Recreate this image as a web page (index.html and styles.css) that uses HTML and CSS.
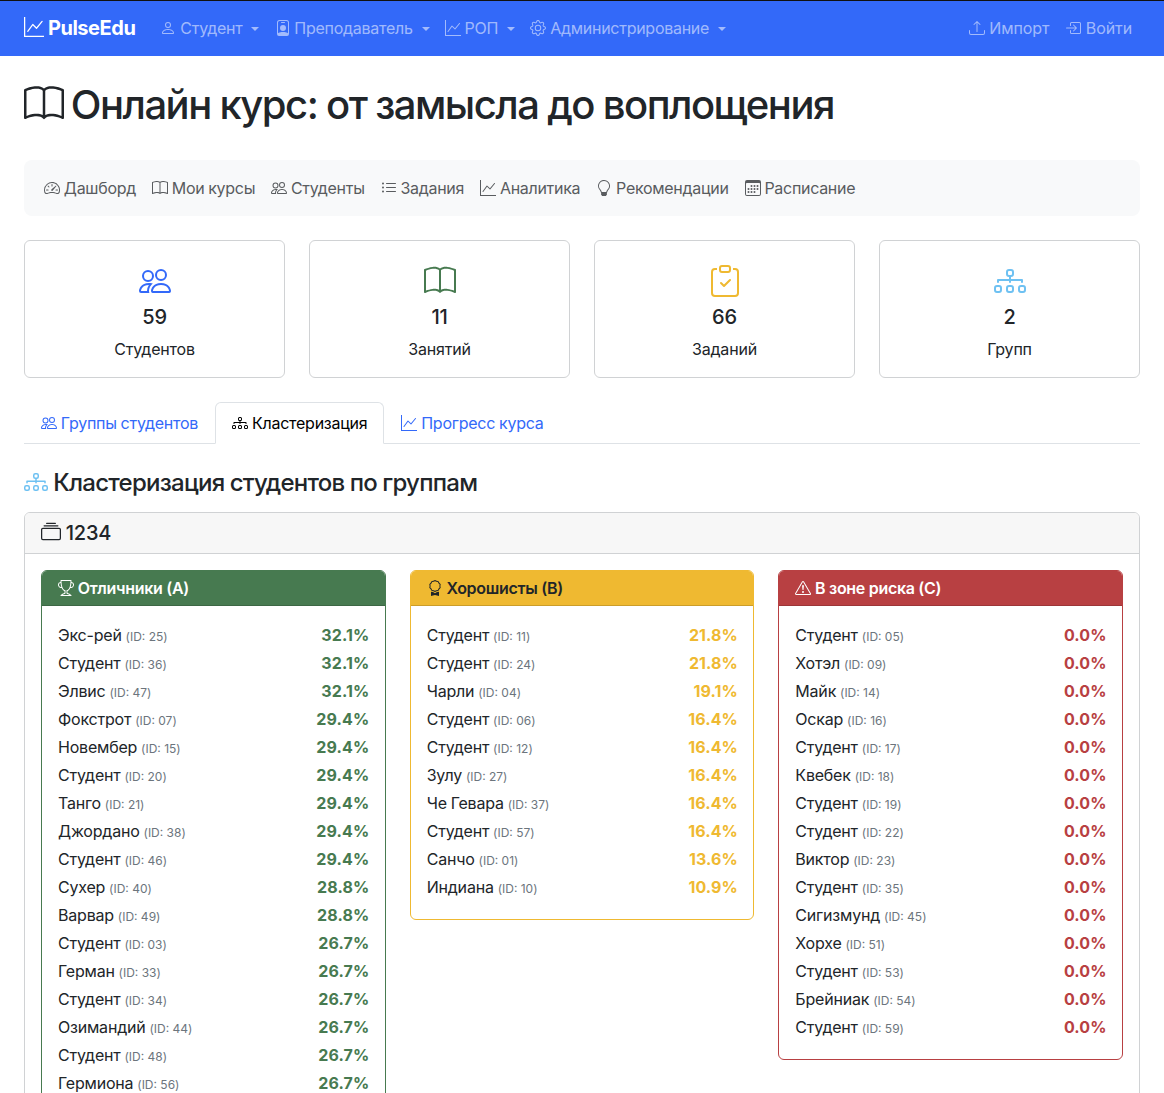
FILE: index.html
```html
<!DOCTYPE html>
<html lang="ru">

<head>
    <meta charset="UTF-8">
    <meta name="viewport" content="width=device-width, initial-scale=1.0">
    <title>PulseEdu</title>
    <link rel="stylesheet" href="styles.css">
</head>

<body>
    <svg class="icon-sprite" xmlns="http://www.w3.org/2000/svg">
        <symbol id="i-graph" viewBox="0 0 16 16"><path d="M0 0h1v15h15v1H0zm14.817 3.113a.5.5 0 0 1 .07.704l-4.5 5.5a.5.5 0 0 1-.74.037L7.06 6.767l-3.656 5.027a.5.5 0 0 1-.808-.588l4-5.5a.5.5 0 0 1 .758-.06l2.609 2.61 4.15-5.073a.5.5 0 0 1 .704-.07"/></symbol>
        <symbol id="i-person" viewBox="0 0 16 16"><path d="M8 8a3 3 0 1 0 0-6 3 3 0 0 0 0 6m2-3a2 2 0 1 1-4 0 2 2 0 0 1 4 0m4 8c0 1-1 1-1 1H3s-1 0-1-1 1-4 6-4 6 3 6 4m-1-.004c-.001-.246-.154-.986-.832-1.664C11.516 10.68 10.289 10 8 10s-3.516.68-4.168 1.332c-.678.678-.83 1.418-.832 1.664z"/></symbol>
        <symbol id="i-badge" viewBox="0 0 16 16"><path d="M6.5 2a.5.5 0 0 0 0 1h3a.5.5 0 0 0 0-1zM11 8a3 3 0 1 1-6 0 3 3 0 0 1 6 0"/><path d="M4.5 0A2.5 2.5 0 0 0 2 2.5V14a2 2 0 0 0 2 2h8a2 2 0 0 0 2-2V2.5A2.5 2.5 0 0 0 11.5 0zM3 2.5A1.5 1.5 0 0 1 4.5 1h7A1.5 1.5 0 0 1 13 2.5v10.795a4.2 4.2 0 0 0-.776-.492C11.392 12.387 10.063 12 8 12s-3.392.387-4.224.803a4.2 4.2 0 0 0-.776.492z"/></symbol>
        <symbol id="i-gear" viewBox="0 0 16 16"><path d="M8 4.754a3.246 3.246 0 1 0 0 6.492 3.246 3.246 0 0 0 0-6.492M5.754 8a2.246 2.246 0 1 1 4.492 0 2.246 2.246 0 0 1-4.492 0"/><path d="M9.796 1.343c-.527-1.79-3.065-1.79-3.592 0l-.094.319a.873.873 0 0 1-1.255.52l-.292-.16c-1.64-.892-3.433.902-2.54 2.541l.159.292a.873.873 0 0 1-.52 1.255l-.319.094c-1.79.527-1.79 3.065 0 3.592l.319.094a.873.873 0 0 1 .52 1.255l-.16.292c-.892 1.64.901 3.434 2.541 2.54l.292-.159a.873.873 0 0 1 1.255.52l.094.319c.527 1.79 3.065 1.79 3.592 0l.094-.319a.873.873 0 0 1 1.255-.52l.292.16c1.64.893 3.434-.902 2.54-2.541l-.159-.292a.873.873 0 0 1 .52-1.255l.319-.094c1.79-.527 1.79-3.065 0-3.592l-.319-.094a.873.873 0 0 1-.52-1.255l.16-.292c.893-1.64-.902-3.433-2.541-2.54l-.292.159a.873.873 0 0 1-1.255-.52zm-2.633.283c.246-.835 1.428-.835 1.674 0l.094.319a1.873 1.873 0 0 0 2.693 1.115l.291-.16c.764-.415 1.6.42 1.184 1.185l-.159.292a1.873 1.873 0 0 0 1.116 2.692l.318.094c.835.246.835 1.428 0 1.674l-.319.094a1.873 1.873 0 0 0-1.115 2.693l.16.291c.415.764-.42 1.6-1.185 1.184l-.291-.159a1.873 1.873 0 0 0-2.693 1.116l-.094.318c-.246.835-1.428.835-1.674 0l-.094-.319a1.873 1.873 0 0 0-2.692-1.115l-.292.16c-.764.415-1.6-.42-1.184-1.185l.159-.291A1.873 1.873 0 0 0 1.945 8.93l-.319-.094c-.835-.246-.835-1.428 0-1.674l.319-.094A1.873 1.873 0 0 0 3.06 4.377l-.16-.292c-.415-.764.42-1.6 1.185-1.184l.292.159a1.873 1.873 0 0 0 2.692-1.115z"/></symbol>
        <symbol id="i-upload" viewBox="0 0 16 16"><path d="M.5 9.9a.5.5 0 0 1 .5.5v2.5a1 1 0 0 0 1 1h12a1 1 0 0 0 1-1v-2.5a.5.5 0 0 1 1 0v2.5a2 2 0 0 1-2 2H2a2 2 0 0 1-2-2v-2.5a.5.5 0 0 1 .5-.5"/><path d="M7.646 1.146a.5.5 0 0 1 .708 0l3 3a.5.5 0 0 1-.708.708L8.5 2.707V11.5a.5.5 0 0 1-1 0V2.707L5.354 4.854a.5.5 0 1 1-.708-.708z"/></symbol>
        <symbol id="i-login" viewBox="0 0 16 16"><path d="M6 3.5a.5.5 0 0 1 .5-.5h8a.5.5 0 0 1 .5.5v9a.5.5 0 0 1-.5.5h-8a.5.5 0 0 1-.5-.5v-2a.5.5 0 0 0-1 0v2A1.5 1.5 0 0 0 6.5 14h8a1.5 1.5 0 0 0 1.5-1.5v-9A1.5 1.5 0 0 0 14.5 2h-8A1.5 1.5 0 0 0 5 3.5v2a.5.5 0 0 0 1 0z"/><path d="M11.854 8.354a.5.5 0 0 0 0-.708l-3-3a.5.5 0 1 0-.708.708L10.293 7.5H1.5a.5.5 0 0 0 0 1h8.793l-2.147 2.146a.5.5 0 0 0 .708.708z"/></symbol>
        <symbol id="i-book" viewBox="0 0 16 16"><path d="M1 2.828c.885-.37 2.154-.769 3.388-.893 1.33-.134 2.458.063 3.112.752v9.746c-.935-.53-2.12-.603-3.213-.493-1.18.12-2.37.461-3.287.811zm7.5-.141c.654-.689 1.782-.886 3.112-.752 1.234.124 2.503.523 3.388.893v9.923c-.918-.35-2.107-.692-3.287-.81-1.094-.111-2.278-.039-3.213.492zM8 1.783C7.015.936 5.587.81 4.287.94c-1.514.153-3.042.672-3.994 1.105A.5.5 0 0 0 0 2.5v11a.5.5 0 0 0 .707.455c.882-.4 2.303-.881 3.68-1.02 1.409-.142 2.59.087 3.223.877a.5.5 0 0 0 .78 0c.633-.79 1.814-1.019 3.222-.877 1.378.139 2.8.62 3.681 1.02A.5.5 0 0 0 16 13.5v-11a.5.5 0 0 0-.293-.455c-.952-.433-2.48-.952-3.994-1.105C10.413.809 8.985.936 8 1.783"/></symbol>
        <symbol id="i-speed" viewBox="0 0 16 16"><path d="M8 4a.5.5 0 0 1 .5.5V6a.5.5 0 0 1-1 0V4.5A.5.5 0 0 1 8 4M3.732 5.732a.5.5 0 0 1 .707 0l.915.914a.5.5 0 1 1-.708.708l-.914-.915a.5.5 0 0 1 0-.707M2 10a.5.5 0 0 1 .5-.5h1.586a.5.5 0 0 1 0 1H2.5A.5.5 0 0 1 2 10m9.5 0a.5.5 0 0 1 .5-.5h1.5a.5.5 0 0 1 0 1H12a.5.5 0 0 1-.5-.5m.754-4.246a.39.39 0 0 0-.527-.02L7.547 9.31a.91.91 0 1 0 1.302 1.258l3.434-4.297a.39.39 0 0 0-.029-.518z"/><path d="M0 10a8 8 0 1 1 15.547 2.661c-.442 1.253-1.845 1.602-2.932 1.25C11.309 13.488 9.475 13 8 13c-1.474 0-3.31.488-4.615.911-1.087.352-2.49.003-2.932-1.25A8 8 0 0 1 0 10m8-7a7 7 0 0 0-6.603 9.329c.203.575.923.876 1.68.63C4.397 12.533 6.358 12 8 12s3.604.532 4.923.96c.757.245 1.477-.056 1.68-.631A7 7 0 0 0 8 3"/></symbol>
        <symbol id="i-people" viewBox="0 0 16 16"><path d="M15 14s1 0 1-1-1-4-5-4-5 3-5 4 1 1 1 1zm-7.978-1L7 12.996c.001-.264.167-1.03.76-1.72C8.312 10.629 9.282 10 11 10c1.717 0 2.687.63 3.24 1.276.593.69.758 1.457.76 1.72l-.008.002-.014.002zM11 7a2 2 0 1 0 0-4 2 2 0 0 0 0 4m3-2a3 3 0 1 1-6 0 3 3 0 0 1 6 0M6.936 9.28a6 6 0 0 0-1.23-.247A7 7 0 0 0 5 9c-4 0-5 3-5 4q0 1 1 1h4.216A2.24 2.24 0 0 1 5 13c0-1.01.377-2.042 1.09-2.904.243-.294.526-.569.846-.816M4.92 10A5.5 5.5 0 0 0 4 13H1c0-.26.164-1.03.76-1.724.545-.636 1.492-1.256 3.16-1.275ZM1.5 5.5a3 3 0 1 1 6 0 3 3 0 0 1-6 0m3-2a2 2 0 1 0 0 4 2 2 0 0 0 0-4"/></symbol>
        <symbol id="i-list" viewBox="0 0 16 16"><path d="M5 11.5a.5.5 0 0 1 .5-.5h9a.5.5 0 0 1 0 1h-9a.5.5 0 0 1-.5-.5m0-4a.5.5 0 0 1 .5-.5h9a.5.5 0 0 1 0 1h-9a.5.5 0 0 1-.5-.5m0-4a.5.5 0 0 1 .5-.5h9a.5.5 0 0 1 0 1h-9a.5.5 0 0 1-.5-.5m-3 1a1 1 0 1 0 0-2 1 1 0 0 0 0 2m0 4a1 1 0 1 0 0-2 1 1 0 0 0 0 2m0 4a1 1 0 1 0 0-2 1 1 0 0 0 0 2"/></symbol>
        <symbol id="i-bulb" viewBox="0 0 16 16"><path d="M2 6a6 6 0 1 1 10.174 4.31c-.203.196-.359.4-.453.619l-.762 1.769A.5.5 0 0 1 10.5 13a.5.5 0 0 1 0 1 .5.5 0 0 1 0 1l-.224.447a1 1 0 0 1-.894.553H6.618a1 1 0 0 1-.894-.553L5.5 15a.5.5 0 0 1 0-1 .5.5 0 0 1 0-1 .5.5 0 0 1-.46-.302l-.761-1.77a2 2 0 0 0-.453-.618A5.98 5.98 0 0 1 2 6m6-5a5 5 0 0 0-3.479 8.592c.263.254.514.564.676.941L5.83 12h4.342l.632-1.467c.162-.377.413-.687.676-.941A5 5 0 0 0 8 1"/></symbol>
        <symbol id="i-calendar" viewBox="0 0 16 16"><path d="M14 0H2a2 2 0 0 0-2 2v12a2 2 0 0 0 2 2h12a2 2 0 0 0 2-2V2a2 2 0 0 0-2-2M1 3.857C1 3.384 1.448 3 2 3h12c.552 0 1 .384 1 .857v10.286c0 .473-.448.857-1 .857H2c-.552 0-1-.384-1-.857z"/><path d="M6.5 7a1 1 0 1 0 0-2 1 1 0 0 0 0 2m3 0a1 1 0 1 0 0-2 1 1 0 0 0 0 2m3 0a1 1 0 1 0 0-2 1 1 0 0 0 0 2m-9 3a1 1 0 1 0 0-2 1 1 0 0 0 0 2m3 0a1 1 0 1 0 0-2 1 1 0 0 0 0 2m3 0a1 1 0 1 0 0-2 1 1 0 0 0 0 2m3 0a1 1 0 1 0 0-2 1 1 0 0 0 0 2m-9 3a1 1 0 1 0 0-2 1 1 0 0 0 0 2m3 0a1 1 0 1 0 0-2 1 1 0 0 0 0 2m3 0a1 1 0 1 0 0-2 1 1 0 0 0 0 2"/></symbol>
        <symbol id="i-clipboard" viewBox="0 0 16 16"><path d="M10.854 7.146a.5.5 0 0 1 0 .708l-3 3a.5.5 0 0 1-.708 0l-1.5-1.5a.5.5 0 1 1 .708-.708L7.5 9.793l2.646-2.647a.5.5 0 0 1 .708 0"/><path d="M4 1.5H3a2 2 0 0 0-2 2V14a2 2 0 0 0 2 2h10a2 2 0 0 0 2-2V3.5a2 2 0 0 0-2-2h-1v1h1a1 1 0 0 1 1 1V14a1 1 0 0 1-1 1H3a1 1 0 0 1-1-1V3.5a1 1 0 0 1 1-1h1z"/><path d="M9.5 1a.5.5 0 0 1 .5.5v1a.5.5 0 0 1-.5.5h-3a.5.5 0 0 1-.5-.5v-1a.5.5 0 0 1 .5-.5zm-3-1A1.5 1.5 0 0 0 5 1.5v1A1.5 1.5 0 0 0 6.5 4h3A1.5 1.5 0 0 0 11 2.5v-1A1.5 1.5 0 0 0 9.5 0z"/></symbol>
        <symbol id="i-diagram" viewBox="0 0 16 16"><path fill-rule="evenodd" d="M6 3.5A1.5 1.5 0 0 1 7.5 2h1A1.5 1.5 0 0 1 10 3.5v1A1.5 1.5 0 0 1 8.5 6v1H14a.5.5 0 0 1 .5.5v1a.5.5 0 0 1-1 0V8h-5v.5a.5.5 0 0 1-1 0V8h-5v.5a.5.5 0 0 1-1 0v-1A.5.5 0 0 1 2 7h5.5V6A1.5 1.5 0 0 1 6 4.5zM8.5 5a.5.5 0 0 0 .5-.5v-1a.5.5 0 0 0-.5-.5h-1a.5.5 0 0 0-.5.5v1a.5.5 0 0 0 .5.5zM0 11.5A1.5 1.5 0 0 1 1.5 10h1A1.5 1.5 0 0 1 4 11.5v1A1.5 1.5 0 0 1 2.5 14h-1A1.5 1.5 0 0 1 0 12.5zm1.5-.5a.5.5 0 0 0-.5.5v1a.5.5 0 0 0 .5.5h1a.5.5 0 0 0 .5-.5v-1a.5.5 0 0 0-.5-.5zm4.5.5A1.5 1.5 0 0 1 7.5 10h1a1.5 1.5 0 0 1 1.5 1.5v1A1.5 1.5 0 0 1 8.5 14h-1A1.5 1.5 0 0 1 6 12.5zm1.5-.5a.5.5 0 0 0-.5.5v1a.5.5 0 0 0 .5.5h1a.5.5 0 0 0 .5-.5v-1a.5.5 0 0 0-.5-.5zm4.5.5a1.5 1.5 0 0 1 1.5-1.5h1a1.5 1.5 0 0 1 1.5 1.5v1a1.5 1.5 0 0 1-1.5 1.5h-1a1.5 1.5 0 0 1-1.5-1.5zm1.5-.5a.5.5 0 0 0-.5.5v1a.5.5 0 0 0 .5.5h1a.5.5 0 0 0 .5-.5v-1a.5.5 0 0 0-.5-.5z"/></symbol>
        <symbol id="i-collection" viewBox="0 0 16 16"><path d="M2.5 3.5a.5.5 0 0 1 0-1h11a.5.5 0 0 1 0 1zm2-2a.5.5 0 0 1 0-1h7a.5.5 0 0 1 0 1zM0 13a1.5 1.5 0 0 0 1.5 1.5h13A1.5 1.5 0 0 0 16 13V6a1.5 1.5 0 0 0-1.5-1.5h-13A1.5 1.5 0 0 0 0 6zm1.5.5A.5.5 0 0 1 1 13V6a.5.5 0 0 1 .5-.5h13a.5.5 0 0 1 .5.5v7a.5.5 0 0 1-.5.5z"/></symbol>
        <symbol id="i-trophy" viewBox="0 0 16 16"><path d="M2.5.5A.5.5 0 0 1 3 0h10a.5.5 0 0 1 .5.5q0 .807-.034 1.536a3 3 0 1 1-1.133 5.89c-.79 1.865-1.878 2.777-2.833 3.011v2.173l1.425.356c.194.048.377.135.537.255L13.3 15.1a.5.5 0 0 1-.3.9H3a.5.5 0 0 1-.3-.9l1.838-1.379c.16-.12.343-.207.537-.255L6.5 13.11v-2.173c-.955-.234-2.043-1.146-2.833-3.012a3 3 0 1 1-1.132-5.89A33 33 0 0 1 2.5.5m.099 2.54a2 2 0 0 0 .72 3.935c-.333-1.05-.588-2.346-.72-3.935m10.083 3.935a2 2 0 0 0 .72-3.935c-.133 1.59-.388 2.885-.72 3.935M3.504 1q.01.775.056 1.469c.13 2.028.457 3.546.87 4.667C5.294 9.48 6.484 10 7 10a.5.5 0 0 1 .5.5v2.61a1 1 0 0 1-.757.97l-1.426.356a.5.5 0 0 0-.179.085L4.5 15h7l-.638-.479a.5.5 0 0 0-.18-.085l-1.425-.356a1 1 0 0 1-.757-.97V10.5A.5.5 0 0 1 9 10c.516 0 1.706-.52 2.57-2.864.413-1.12.74-2.64.87-4.667q.045-.694.056-1.469z"/></symbol>
        <symbol id="i-award" viewBox="0 0 16 16"><path d="M9.669.864 8 0 6.331.864l-1.858.282-.842 1.68-1.337 1.32L2.6 6l-.306 1.854 1.337 1.32.842 1.68 1.858.282L8 12l1.669-.864 1.858-.282.842-1.68 1.337-1.32L13.4 6l.306-1.854-1.337-1.32-.842-1.68zm1.196 1.193.684 1.365 1.086 1.072L12.387 6l.248 1.506-1.086 1.072-.684 1.365-1.51.229L8 10.874l-1.355-.702-1.51-.229-.684-1.365-1.086-1.072L3.614 6l-.25-1.506 1.087-1.072.684-1.365 1.51-.229L8 1.126l1.356.702z"/><path d="M4 11.794V16l4-1 4 1v-4.206l-2.018.306L8 13.126 6.018 12.1z"/></symbol>
        <symbol id="i-warning" viewBox="0 0 16 16"><path d="M7.938 2.016A.13.13 0 0 1 8.002 2a.13.13 0 0 1 .063.016.15.15 0 0 1 .054.057l6.857 11.667c.036.06.035.124.002.183a.2.2 0 0 1-.054.06.1.1 0 0 1-.066.017H1.146a.1.1 0 0 1-.066-.017.2.2 0 0 1-.054-.06.18.18 0 0 1 .002-.183L7.884 2.073a.15.15 0 0 1 .054-.057m1.044-.45a1.13 1.13 0 0 0-1.96 0L.165 13.233c-.457.778.091 1.767.98 1.767h13.713c.889 0 1.438-.99.98-1.767z"/><path d="M7.002 12a1 1 0 1 1 2 0 1 1 0 0 1-2 0M7.1 5.995a.905.905 0 1 1 1.8 0l-.35 3.507a.552.552 0 0 1-1.1 0z"/></symbol>
    </svg>

    <nav class="navbar">
        <a class="brand" href="#"><svg class="bi brand-icon"><use href="#i-graph"/></svg> PulseEdu</a>
        <div class="nav-main">
            <a class="nav-item caret" href="#"><svg class="bi"><use href="#i-person"/></svg> Студент</a>
            <a class="nav-item caret" href="#"><svg class="bi"><use href="#i-badge"/></svg> Преподаватель</a>
            <a class="nav-item caret" href="#"><svg class="bi"><use href="#i-graph"/></svg> РОП</a>
            <a class="nav-item caret" href="#"><svg class="bi"><use href="#i-gear"/></svg> Администрирование</a>
        </div>
        <div class="nav-end">
            <a class="nav-item" href="#"><svg class="bi"><use href="#i-upload"/></svg> Импорт</a>
            <a class="nav-item" href="#"><svg class="bi"><use href="#i-login"/></svg> Войти</a>
        </div>
    </nav>

    <main class="page">
        <h1 class="page-title"><svg class="bi"><use href="#i-book"/></svg> Онлайн курс: от замысла до воплощения</h1>

        <div class="subnav">
            <a href="#"><svg class="bi"><use href="#i-speed"/></svg> Дашборд</a>
            <a href="#"><svg class="bi"><use href="#i-book"/></svg> Мои курсы</a>
            <a href="#"><svg class="bi"><use href="#i-people"/></svg> Студенты</a>
            <a href="#"><svg class="bi"><use href="#i-list"/></svg> Задания</a>
            <a href="#"><svg class="bi"><use href="#i-graph"/></svg> Аналитика</a>
            <a href="#"><svg class="bi"><use href="#i-bulb"/></svg> Рекомендации</a>
            <a href="#"><svg class="bi"><use href="#i-calendar"/></svg> Расписание</a>
        </div>

        <div class="stats">
            <div class="stat-card">
                <svg class="bi stat-icon text-primary"><use href="#i-people"/></svg>
                <div class="stat-value">59</div>
                <div class="stat-label">Студентов</div>
            </div>
            <div class="stat-card">
                <svg class="bi stat-icon text-success"><use href="#i-book"/></svg>
                <div class="stat-value">11</div>
                <div class="stat-label">Занятий</div>
            </div>
            <div class="stat-card">
                <svg class="bi stat-icon text-warning"><use href="#i-clipboard"/></svg>
                <div class="stat-value">66</div>
                <div class="stat-label">Заданий</div>
            </div>
            <div class="stat-card">
                <svg class="bi stat-icon text-info"><use href="#i-diagram"/></svg>
                <div class="stat-value">2</div>
                <div class="stat-label">Групп</div>
            </div>
        </div>

        <div class="tabs">
            <a class="tab" href="#"><svg class="bi"><use href="#i-people"/></svg> Группы студентов</a>
            <a class="tab active" href="#"><svg class="bi"><use href="#i-diagram"/></svg> Кластеризация</a>
            <a class="tab" href="#"><svg class="bi"><use href="#i-graph"/></svg> Прогресс курса</a>
        </div>

        <h4 class="section-title"><svg class="bi text-info"><use href="#i-diagram"/></svg> Кластеризация студентов по группам</h4>

        <section class="group-card">
            <h5 class="group-header"><svg class="bi"><use href="#i-collection"/></svg> 1234</h5>
            <div class="group-body">

                <div class="cluster cluster-a">
                    <div class="cluster-header"><svg class="bi"><use href="#i-trophy"/></svg> Отличники (A)</div>
                    <ul class="cluster-list">
                        <li><span>Экс-рей <small>(ID: 25)</small></span><b>32.1%</b></li>
                        <li><span>Студент <small>(ID: 36)</small></span><b>32.1%</b></li>
                        <li><span>Элвис <small>(ID: 47)</small></span><b>32.1%</b></li>
                        <li><span>Фокстрот <small>(ID: 07)</small></span><b>29.4%</b></li>
                        <li><span>Новембер <small>(ID: 15)</small></span><b>29.4%</b></li>
                        <li><span>Студент <small>(ID: 20)</small></span><b>29.4%</b></li>
                        <li><span>Танго <small>(ID: 21)</small></span><b>29.4%</b></li>
                        <li><span>Джордано <small>(ID: 38)</small></span><b>29.4%</b></li>
                        <li><span>Студент <small>(ID: 46)</small></span><b>29.4%</b></li>
                        <li><span>Сухер <small>(ID: 40)</small></span><b>28.8%</b></li>
                        <li><span>Варвар <small>(ID: 49)</small></span><b>28.8%</b></li>
                        <li><span>Студент <small>(ID: 03)</small></span><b>26.7%</b></li>
                        <li><span>Герман <small>(ID: 33)</small></span><b>26.7%</b></li>
                        <li><span>Студент <small>(ID: 34)</small></span><b>26.7%</b></li>
                        <li><span>Озимандий <small>(ID: 44)</small></span><b>26.7%</b></li>
                        <li><span>Студент <small>(ID: 48)</small></span><b>26.7%</b></li>
                        <li><span>Гермиона <small>(ID: 56)</small></span><b>26.7%</b></li>
                    </ul>
                </div>

                <div class="cluster cluster-b">
                    <div class="cluster-header"><svg class="bi"><use href="#i-award"/></svg> Хорошисты (B)</div>
                    <ul class="cluster-list">
                        <li><span>Студент <small>(ID: 11)</small></span><b>21.8%</b></li>
                        <li><span>Студент <small>(ID: 24)</small></span><b>21.8%</b></li>
                        <li><span>Чарли <small>(ID: 04)</small></span><b>19.1%</b></li>
                        <li><span>Студент <small>(ID: 06)</small></span><b>16.4%</b></li>
                        <li><span>Студент <small>(ID: 12)</small></span><b>16.4%</b></li>
                        <li><span>Зулу <small>(ID: 27)</small></span><b>16.4%</b></li>
                        <li><span>Че Гевара <small>(ID: 37)</small></span><b>16.4%</b></li>
                        <li><span>Студент <small>(ID: 57)</small></span><b>16.4%</b></li>
                        <li><span>Санчо <small>(ID: 01)</small></span><b>13.6%</b></li>
                        <li><span>Индиана <small>(ID: 10)</small></span><b>10.9%</b></li>
                    </ul>
                </div>

                <div class="cluster cluster-c">
                    <div class="cluster-header"><svg class="bi"><use href="#i-warning"/></svg> В зоне риска (C)</div>
                    <ul class="cluster-list">
                        <li><span>Студент <small>(ID: 05)</small></span><b>0.0%</b></li>
                        <li><span>Хотэл <small>(ID: 09)</small></span><b>0.0%</b></li>
                        <li><span>Майк <small>(ID: 14)</small></span><b>0.0%</b></li>
                        <li><span>Оскар <small>(ID: 16)</small></span><b>0.0%</b></li>
                        <li><span>Студент <small>(ID: 17)</small></span><b>0.0%</b></li>
                        <li><span>Квебек <small>(ID: 18)</small></span><b>0.0%</b></li>
                        <li><span>Студент <small>(ID: 19)</small></span><b>0.0%</b></li>
                        <li><span>Студент <small>(ID: 22)</small></span><b>0.0%</b></li>
                        <li><span>Виктор <small>(ID: 23)</small></span><b>0.0%</b></li>
                        <li><span>Студент <small>(ID: 35)</small></span><b>0.0%</b></li>
                        <li><span>Сигизмунд <small>(ID: 45)</small></span><b>0.0%</b></li>
                        <li><span>Хорхе <small>(ID: 51)</small></span><b>0.0%</b></li>
                        <li><span>Студент <small>(ID: 53)</small></span><b>0.0%</b></li>
                        <li><span>Брейниак <small>(ID: 54)</small></span><b>0.0%</b></li>
                        <li><span>Студент <small>(ID: 59)</small></span><b>0.0%</b></li>
                    </ul>
                </div>

            </div>
        </section>
    </main>
</body>

</html>
```

FILE: styles.css
```css
html, body {
    height: 100%;
    overflow: hidden;
}

body {
    font-family: 'Inter', 'Liberation Sans', sans-serif;
    font-size: 16px;
    line-height: 1.5;
    letter-spacing: -0.2px;
    word-spacing: -0.4px;
    color: #212529;
    background-color: #fff;
    margin: 0;
}

a {
    text-decoration: none;
}

.icon-sprite {
    display: none;
}

.bi {
    width: 1em;
    height: 1em;
    fill: currentColor;
    vertical-align: -0.125em;
}

.text-primary { color: #3369f9; }
.text-success { color: #477a50; }
.text-warning { color: #efb931; }
.text-info { color: #6ec1f2; }

/* top bar */
.navbar {
    display: flex;
    align-items: center;
    box-sizing: border-box;
    height: 56px;
    padding: 0 24px 2px;
    background-color: #3369f9;
    border-top: 1px solid #111;
}

.brand {
    font-size: 20px;
    font-weight: 700;
    letter-spacing: -0.45px;
    color: #fff;
    margin-right: 17px;
    white-space: nowrap;
}

.nav-main {
    display: flex;
    letter-spacing: -0.27px;
}

.nav-end {
    display: flex;
    margin-left: auto;
    letter-spacing: -0.1px;
    word-spacing: 0;
}

.nav-item {
    padding: 8px;
    color: rgba(255, 255, 255, 0.55);
    white-space: nowrap;
}

.caret {
    padding-right: 7.2px;
}

.caret::after {
    content: "";
    display: inline-block;
    margin-left: 9px;
    vertical-align: 3px;
    border-top: 4.2px solid;
    border-right: 4.2px solid transparent;
    border-left: 4.2px solid transparent;
}

/* content */
.page {
    padding: 25px 24px 0;
}

.page-title {
    font-size: 40px;
    font-weight: 500;
    line-height: 1.2;
    letter-spacing: -1.5px;
    margin: 0 0 31px;
}

.page-title .bi {
    margin-right: -2px;
}

.subnav {
    display: flex;
    padding: 8px 12px;
    height: 40px;
    align-items: center;
    background-color: #f8f9fa;
    border-radius: 8px;
    margin-bottom: 24px;
}

.subnav a {
    padding: 8px;
    color: #595c5f;
    letter-spacing: -0.29px;
    white-space: nowrap;
}

.stats {
    display: grid;
    grid-template-columns: repeat(4, 1fr);
    gap: 24px;
    margin-bottom: 24px;
}

.stat-card {
    border: 1px solid #d0d2d4;
    border-radius: 6px;
    padding: 16px;
    height: 138px;
    box-sizing: border-box;
    text-align: center;
}

.stat-icon {
    display: block;
    font-size: 32px;
    margin: 8px auto 8px;
}

.stat-value {
    font-size: 20px;
    font-weight: 500;
    line-height: 1.2;
    margin-bottom: 8px;
}

/* tabs */
.tabs {
    display: flex;
    border-bottom: 1px solid #dee2e6;
    margin-bottom: 25px;
}

.tab {
    padding: 8px 16px;
    color: #3369f9;
    letter-spacing: -0.25px;
    border: 1px solid transparent;
    border-radius: 6px 6px 0 0;
    margin-bottom: -1px;
}

.tab.active {
    color: #000;
    background-color: #fff;
    border-color: #dee2e6 #dee2e6 #fff;
}

.section-title {
    font-size: 24px;
    font-weight: 500;
    line-height: 1.2;
    letter-spacing: -0.75px;
    margin: 0 0 14px;
}

/* group with clusters */
.group-card {
    border: 1px solid #d0d2d4;
    border-radius: 6px;
}

.group-header {
    font-size: 20px;
    font-weight: 500;
    line-height: 1.2;
    margin: 0;
    padding: 8px 16px;
    background-color: #f7f7f7;
    border-bottom: 1px solid #d0d2d4;
    border-radius: 5px 5px 0 0;
}

.group-body {
    display: grid;
    grid-template-columns: repeat(3, 1fr);
    gap: 24px;
    align-items: start;
    padding: 16px;
}

.cluster {
    border: 1px solid;
    border-radius: 6px;
}

.cluster-header {
    padding: 5.5px 16px 5px;
    font-weight: 600;
    letter-spacing: -0.3px;
    word-spacing: 0;
    border-radius: 5px 5px 0 0;
    border-bottom: 1px solid rgba(0, 0, 0, 0.15);
}

.cluster-list {
    list-style: none;
    margin: 0;
    padding: 15px 16px 18px;
}

.cluster-list li {
    display: flex;
    justify-content: space-between;
    align-items: center;
    height: 28px;
}

.cluster-list small {
    font-size: 12px;
    letter-spacing: 0;
    word-spacing: 0;
    color: #6c757d;
}

.cluster-list b {
    font-weight: 700;
    letter-spacing: 0.1px;
    margin-right: -0.6px;
}

.cluster-a { border-color: #477a50; }
.cluster-a .cluster-header { background-color: #477a50; color: #fff; }
.cluster-a b { color: #477a50; }

.cluster-b { border-color: #efb931; }
.cluster-b .cluster-header { background-color: #efb931; color: #212529; }
.cluster-b b { color: #efb931; }

.cluster-c { border-color: #b84042; }
.cluster-c .cluster-header { background-color: #b84042; color: #fff; }
.cluster-c b { color: #b84042; }
```
